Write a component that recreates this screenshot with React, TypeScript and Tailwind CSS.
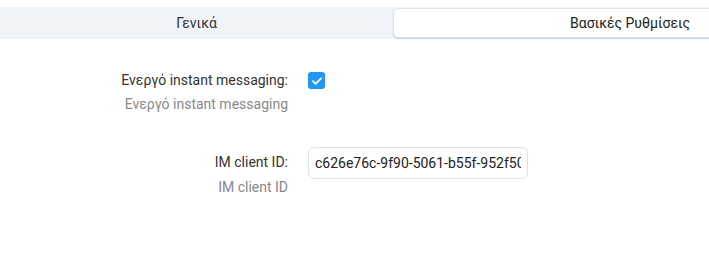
import React from 'react';

const App: React.FC = () => {
  return (
    <div className="w-[709px] h-[274px] overflow-hidden bg-white font-['Roboto',sans-serif] text-[14px]">
      {/* Tabs */}
      <div className="mt-[7px] flex h-[32px] w-[867px] bg-[#f0f3f8] pt-[1px] pb-[1px]">
        <div className="flex w-[393px] items-center justify-center text-[#333]">Γενικά</div>
        <div className="flex w-[474px] items-center justify-center rounded-[5px] border border-[#dfe4ee] bg-white text-[#222] shadow-[0_1px_1px_rgba(150,165,200,0.5)]">
          Βασικές Ρυθμίσεις
        </div>
      </div>

      {/* Form */}
      <div className="mt-[32px] flex flex-col">
        <div className="flex">
          <div className="w-[288px] text-right">
            <div className="h-[18px] leading-[18px] text-[#333]">Ενεργό instant messaging:</div>
            <div className="mt-[6px] leading-[18px] text-[#888]">Ενεργό instant messaging</div>
          </div>
          <div className="ml-[20px] pt-[1px]">
            <div className="flex h-[17px] w-[17px] items-center justify-center rounded-[3px] bg-[#2196f3]">
              <svg width="12" height="12" viewBox="0 0 12 12" fill="none">
                <path d="M2 6.2l2.6 2.6L10 3.4" stroke="white" strokeWidth="1.8" strokeLinecap="round" strokeLinejoin="round" />
              </svg>
            </div>
          </div>
        </div>

        <div className="mt-[34px] flex">
          <div className="w-[288px] pt-[6px] text-right">
            <div className="leading-[18px] text-[#333]">IM client ID:</div>
            <div className="mt-[7px] leading-[18px] text-[#888]">IM client ID</div>
          </div>
          <div className="ml-[20px]">
            <input
              readOnly
              value="c626e76c-9f90-5061-b55f-952f50c1a2b3"
              className="h-[32px] w-[220px] rounded-[6px] border border-[#dde2ea] bg-white pl-[6px] pr-[6px] text-[14px] text-[#222] outline-none"
            />
          </div>
        </div>
      </div>
    </div>
  );
};

export default App;
